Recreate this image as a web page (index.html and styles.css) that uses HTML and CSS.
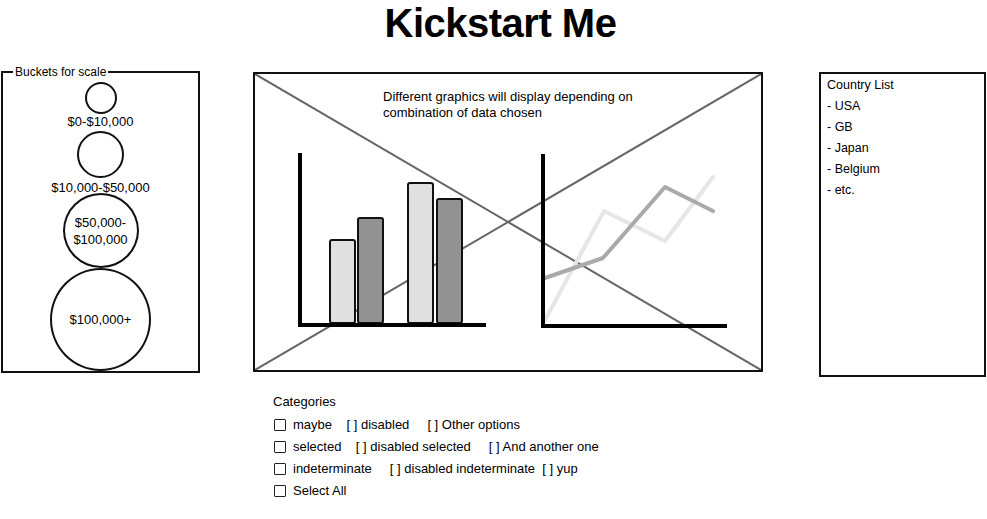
FILE: index.html
```html
<!DOCTYPE html>
<html>
	<head>
		<meta charset="utf-8">
		<title>Kickstart Me</title>
		<link rel="stylesheet" href="styles.css">
	</head>
	<body>
		<h1 class="title">Kickstart Me</h1>
		<div class="main">
			<!-- 左边: 气泡大小说明 -->
			<fieldset class="buckets">
				<legend>Buckets for scale</legend>
				<div class="bubble b1"></div>
				<div class="bucketLabel l1">$0-$10,000</div>
				<div class="bubble b2"></div>
				<div class="bucketLabel l2">$10,000-$50,000</div>
				<div class="bubble b3">$50,000-<br>$100,000</div>
				<div class="bubble b4">$100,000+</div>
			</fieldset>

			<!-- 中间: 图表区域 + 分类 -->
			<div class="centerCol">
				<div class="graphBox">
					<svg class="graph" viewBox="0 0 506 296" width="506" height="296">
						<line x1="0" y1="0" x2="506" y2="296" stroke="#666" stroke-width="2"/>
						<line x1="0" y1="296" x2="506" y2="0" stroke="#666" stroke-width="2"/>
						<!-- 柱状图 -->
						<rect x="75" y="166" width="25" height="83" rx="2" fill="#e0e0e0" stroke="#111" stroke-width="2"/>
						<rect x="103" y="144" width="25" height="105" rx="2" fill="#929292" stroke="#111" stroke-width="2"/>
						<rect x="153" y="109" width="25" height="140" rx="2" fill="#e0e0e0" stroke="#111" stroke-width="2"/>
						<rect x="182" y="125" width="25" height="124" rx="2" fill="#929292" stroke="#111" stroke-width="2"/>
						<path d="M45 79 V251 H231" fill="none" stroke="#000" stroke-width="4"/>
						<!-- 折线图 -->
						<polyline points="290,246 349,137 410,167 458,103" fill="none" stroke="#e6e6e6" stroke-width="4" stroke-linecap="round" stroke-linejoin="round"/>
						<polyline points="290,204 348,184 410,113 458,137" fill="none" stroke="#aaa" stroke-width="4" stroke-linecap="round" stroke-linejoin="round"/>
						<path d="M288 80 V252 H472" fill="none" stroke="#000" stroke-width="4"/>
					</svg>
					<p class="caption">Different graphics will display depending on<br>combination of data chosen</p>
				</div>

				<div class="categories">
					<div class="catTitle">Categories</div>
					<div class="catRow"><span class="check"></span><span class="catText">maybe    [ ] disabled     [ ] Other options</span></div>
					<div class="catRow"><span class="check"></span><span class="catText">selected    [ ] disabled selected     [ ] And another one</span></div>
					<div class="catRow"><span class="check"></span><span class="catText">indeterminate     [ ] disabled indeterminate  [ ] yup</span></div>
					<div class="catRow"><span class="check"></span><span class="catText">Select All</span></div>
				</div>
			</div>

			<!-- 右边: 国家列表 -->
			<div class="countryBox">
				<ul>
					<li>Country List</li>
					<li>- USA</li>
					<li>- GB</li>
					<li>- Japan</li>
					<li>- Belgium</li>
					<li>- etc.</li>
				</ul>
			</div>
		</div>
	</body>
</html>
```

FILE: styles.css
```css
* {
	margin: 0;
	padding: 0;
	box-sizing: border-box;
}
body {
	font-family: "Liberation Sans", Arial, sans-serif;
	color: #000;
	background: #fff;
}
.title {
	font-size: 40px;
	line-height: 46px;
	font-weight: bold;
	letter-spacing: -0.5px;
	text-align: center;
	padding-left: 14px;
}
.main {
	display: flex;
	align-items: flex-start;
	margin-top: 26px;
	padding-left: 1px;
}

/* 左边 */
.buckets {
	width: 199px;
	height: 308px;
	margin-top: -7px;
	border: 2px solid #111;
	display: flex;
	flex-direction: column;
	align-items: center;
	min-width: 0;
}
.buckets legend {
	font-size: 12px;
	line-height: 14px;
	margin-left: 10px;
	padding: 0 2px;
}
.bubble {
	border: 2px solid #111;
	border-radius: 50%;
	display: flex;
	align-items: center;
	justify-content: center;
	text-align: center;
	font-size: 13px;
	line-height: 17px;
}
.b1 {
	width: 32px;
	height: 32px;
	margin-top: 3px;
}
.b2 {
	width: 47px;
	height: 47px;
	margin-top: 2px;
}
.b3 {
	width: 76px;
	height: 75px;
	margin-top: -2px;
}
.b4 {
	width: 101px;
	height: 103px;
}
.bucketLabel {
	font-size: 13px;
	line-height: 15px;
}
.l2 {
	margin-top: 2px;
}

/* 中间 */
.centerCol {
	margin-left: 53px;
}
.graphBox {
	width: 510px;
	height: 300px;
	border: 2px solid #111;
	position: relative;
}
.graph {
	display: block;
}
.caption {
	position: absolute;
	left: 128px;
	top: 15px;
	font-size: 13px;
	line-height: 16px;
}
.categories {
	margin-top: 19px;
	margin-left: 20px;
	font-size: 13px;
	line-height: 22px;
}
.catTitle {
	margin-bottom: 1px;
}
.catRow {
	display: flex;
	align-items: center;
}
.check {
	width: 12px;
	height: 12px;
	border: 1.5px solid #222;
	border-radius: 1px;
	margin-left: 1px;
	margin-right: 7px;
}
.catText {
	white-space: pre;
}

/* 右边 */
.countryBox {
	width: 167px;
	height: 305px;
	margin-left: 56px;
	border: 2px solid #111;
	padding-left: 6px;
	padding-top: 1px;
}
.countryBox ul {
	list-style: none;
	font-size: 12.5px;
	line-height: 21px;
}
```
